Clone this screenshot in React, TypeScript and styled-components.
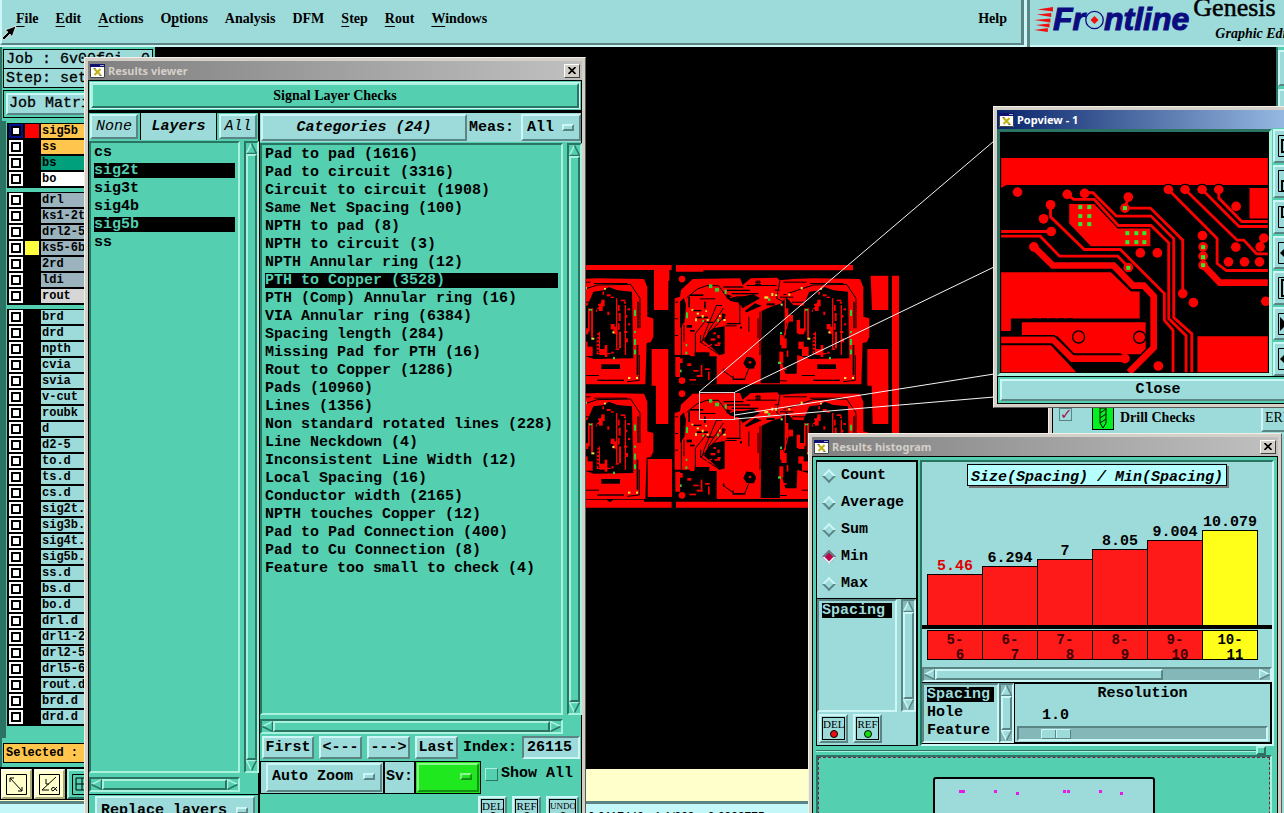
import React from "react";
import styled, { createGlobalStyle, css } from "styled-components";

const c = {
  cyan: "#9ddbdb",
  cyanLight: "#cdf6f6",
  cyanDark: "#5b8585",
  cyanTrough: "#84b8b8",
  green: "#54cfb0",
  greenLight: "#a9f2de",
  greenDark: "#2b7463",
  cream: "#ffffcc",
  orange: "#ffc54c",
  red: "#ff0000",
};

const mono = `"Liberation Mono", monospace`;
const serif = `"Liberation Serif", serif`;

const GlobalStyle = createGlobalStyle`
  *, *::before, *::after { box-sizing: border-box; }
  body { margin: 0; background: #000; overflow: hidden; color: #000;
    font: bold 15px/18px ${mono}; }
  button, input, select { font: inherit; color: inherit; margin: 0; border-radius: 0; }
  button { padding: 0; white-space: nowrap; }
  ul { margin: 0; padding: 0; list-style: none; }
  svg { display: block; flex: none; }
`;

type Tone = "cyan" | "green" | "cream" | "lime";

const tones = {
  cyan: [c.cyan, c.cyanLight, c.cyanDark],
  green: [c.green, c.greenLight, c.greenDark],
  cream: [c.cream, "#fffff0", "#a8a878"],
  lime: ["#1fe81f", "#8ff58f", "#179017"],
};

const raised = css<{ $tone?: Tone }>`
  background: ${(p) => tones[p.$tone ?? "cyan"][0]};
  border: 2px solid;
  border-color: ${(p) => {
    const [, l, d] = tones[p.$tone ?? "cyan"];
    return `${l} ${d} ${d} ${l}`;
  }};
`;

const sunken = css<{ $tone?: Tone }>`
  background: ${(p) => tones[p.$tone ?? "cyan"][0]};
  border: 2px solid;
  border-color: ${(p) => {
    const [, l, d] = tones[p.$tone ?? "cyan"];
    return `${d} ${l} ${l} ${d}`;
  }};
`;

/* ---------- desktop ---------- */

const Desktop = styled.div`
  position: relative;
  display: flex;
  flex-direction: column;
  height: 100vh;
  overflow: hidden;
  background: #000;
`;

const Header = styled.header`
  display: flex;
  height: 47px;
  flex: none;
  background: ${c.cyan};
`;

const MenuBar = styled.nav`
  flex: 1;
  display: flex;
  align-items: flex-start;
  gap: 17px;
  padding: 11px 14px 0 14px;
  border: solid;
  border-width: 0 3px 2px 2px;
  border-color: ${c.cyanDark} ${c.cyanDark} ${c.cyanDark} ${c.cyanLight};
  box-shadow: 0 2px ${c.cyanLight};
  margin-bottom: 2px;
`;

const MenuItem = styled.button<{ $end?: boolean }>`
  border: 0;
  background: none;
  font: bold 14px/16px ${serif};
  margin-left: ${(p) => (p.$end ? "auto" : "0")};
  u {
    text-decoration: underline;
    text-underline-offset: 3px;
  }
`;

const Brand = styled.div`
  display: flex;
  gap: 4px;
  width: 260px;
  padding-left: 4px;
  border-left: 3px solid ${c.cyanLight};
  box-shadow: inset 3px 0 ${c.cyanDark}, inset 0 -2px ${c.cyanLight};
  overflow: hidden;
`;

const Logo = styled.div`
  display: flex;
  align-items: center;
  height: 38px;
  padding-left: 3px;
  color: #0c0c80;
  font: italic bold 32px/38px "Liberation Sans", sans-serif;
  -webkit-text-stroke: 1px #0c0c80;
`;

const Product = styled.div`
  font: 26px/16px ${serif};
  white-space: nowrap;
  -webkit-text-stroke: 0.5px #000;
  small {
    display: block;
    font: italic bold 14px/16px ${serif};
    padding: 10px 0 0 22px;
    -webkit-text-stroke: 0;
  }
`;

const Workspace = styled.main`
  flex: 1;
  min-height: 0;
  display: flex;
`;

const Sidebar = styled.aside`
  width: 155px;
  flex: none;
  display: flex;
  flex-direction: column;
  background: ${c.green};
  border-left: 2px solid ${c.greenDark};
  overflow: hidden;
`;

const JobInfo = styled.div`
  flex: none;
  margin: 2px 2px 2px 1px;
  border: 1px solid #000;
  background: ${c.cyan};
  font-weight: normal;
  line-height: 20px;
  -webkit-text-stroke: 0.3px #000;
  white-space: pre;
  div {
    padding: 0 2px;
    height: 18px;
  }
  div + div {
    border-top: 1px solid #000;
    height: 19px;
  }
`;

const MatrixBox = styled.div`
  flex: none;
  margin: 0 1px 3px 1px;
  padding: 2px;
  border: 1px solid #000;
  button {
    ${raised}
    width: 100%;
    height: 22px;
    font-weight: normal;
    text-align: left;
    padding-left: 1px;
    -webkit-text-stroke: 0.3px #000;
  }
`;

const LayerArea = styled.div`
  flex: 1;
  min-height: 0;
  overflow: hidden;
  border-left: 4px solid ${c.greenDark};
  padding: 2px 0 0 1px;
`;

const LayerGroup = styled.ul`
  background: #000;
  padding: 1px 1px 0 2px;
  margin-bottom: 4px;
`;

const LayerRow = styled.li<{ $bg: string; $swatch: string; $active?: boolean }>`
  label {
    display: grid;
    grid-template-columns: 14px 14px 1fr;
    gap: 2px;
    height: 16px;
    padding-bottom: 2px;
    font-size: 12px;
    line-height: 15px;
  }
  input {
    appearance: none;
    width: 14px;
    height: 14px;
    border: 2px solid ${(p) => (p.$active ? "#001090" : "#fff")};
    background: #fff;
    box-shadow: inset 0 0 0 2px #000;
  }
  i {
    background: ${(p) => p.$swatch};
  }
  span {
    padding-left: 1px;
    background: ${(p) => p.$bg};
    white-space: nowrap;
    overflow: hidden;
  }
`;

const SelectedBar = styled.div`
  flex: none;
  margin: 5px 0 4px 1px;
  padding: 0 2px;
  height: 20px;
  border: 1px solid #000;
  background: ${c.orange};
  font-size: 12px;
`;

const Canvas = styled.section`
  flex: 1;
  background: #000;
`;

const BoardLayer = styled.svg`
  position: absolute;
  left: 580px;
  top: 130px;
`;

const RightTools = styled.aside`
  width: 8px;
  flex: none;
  overflow: hidden;
  background: ${c.green};
  border-left: 2px solid ${c.greenDark};
  display: flex;
  flex-direction: column;
  gap: 3px;
  padding-top: 3px;
`;

const SideTool = styled.button`
  ${raised}
  width: 40px;
  height: 36px;
  flex: none;
`;

const ToolRow = styled.div`
  flex: none;
  display: flex;
  height: 34px;
  border-top: 2px solid #000;
  background: ${c.cream};
`;

const ToolButton = styled.button<{ $tone?: Tone }>`
  ${raised}
  width: 31px;
  height: 30px;
  margin: 0 1px;
  display: grid;
  place-items: center;
  outline: 1px solid #000;
`;

const StatusRow = styled.footer`
  flex: none;
  height: 12px;
  overflow: hidden;
  border-top: 3px solid ${c.cyanDark};
  background: #c4f8f8;
  padding: 5px 0 0 588px;
  font: 12px/16px "Liberation Sans", sans-serif;
  white-space: pre;
`;

/* ---------- windows ---------- */

const Frame = styled.section<{ $x: number; $y: number; $w?: number }>`
  position: absolute;
  left: ${(p) => p.$x}px;
  top: ${(p) => p.$y}px;
  ${(p) => p.$w && `width: ${p.$w}px;`}
  display: flex;
  flex-direction: column;
  border: 1px solid;
  border-color: #f2efe8 #5a5a5a #5a5a5a #f2efe8;
  background: #d4d0c8;
  padding: 3px;
`;

const TitleBar = styled.div<{ $active?: boolean }>`
  display: flex;
  align-items: center;
  gap: 3px;
  height: 19px;
  padding: 0 2px;
  flex: none;
  background: ${(p) => (p.$active ? "linear-gradient(90deg, #0a246a, #a6caf0)" : "linear-gradient(90deg, #808080, #c0c0c0)")};
  color: ${(p) => (p.$active ? "#fff" : "#d4d0c8")};
  font: bold 11px/14px "Noto Sans", sans-serif;
  button {
    margin-left: auto;
    width: 16px;
    height: 14px;
    display: grid;
    place-items: center;
    background: #d4d0c8;
    border: 1px solid;
    border-color: #fff #404040 #404040 #fff;
  }
`;

const Client = styled.div<{ $tone?: Tone; $pad?: number; $flat?: boolean }>`
  flex: 1;
  min-height: 0;
  display: flex;
  flex-direction: column;
  border: ${(p) => (p.$flat ? "0" : "1px")} solid #000;
  background: ${(p) => tones[p.$tone ?? "green"][0]};
  padding: ${(p) => p.$pad ?? 0}px;
`;

const PushButton = styled.button<{ $tone?: Tone; $w?: number; $italic?: boolean; $plain?: boolean }>`
  ${raised}
  ${(p) => (p.$w ? `width: ${p.$w}px; flex: none;` : "flex: 1;")}
  height: 100%;
  font-style: ${(p) => (p.$italic ? "italic" : "normal")};
  font-weight: ${(p) => (p.$plain ? "normal" : "bold")};
`;

const Viewer = styled(Frame)`
  bottom: -40px;
`;

const CheckHeading = styled.button`
  ${raised}
  height: 25px;
  margin: 2px;
  flex: none;
  font: bold 14px/18px ${serif};
  outline: 1px solid ${c.cyanLight};
`;

const Columns = styled.div`
  flex: 1;
  min-height: 0;
  display: grid;
  grid-template-columns: 171px 1fr;
  border-top: 3px solid #000;
`;

const Column = styled.div`
  display: flex;
  flex-direction: column;
  min-width: 0;
  min-height: 0;
  border-right: 2px solid #000;
  &:last-child {
    border-right: 0;
  }
`;

const HeadRow = styled.div<{ $bg?: string; $h: number }>`
  display: flex;
  height: ${(p) => p.$h}px;
  padding: 1px;
  flex: none;
  background: ${(p) => p.$bg ?? c.green};
`;

const LayersTitle = styled.h2`
  flex: 1;
  margin: -1px 2px;
  border: solid #000;
  border-width: 0 1px;
  background: ${c.cyan};
  font: italic bold 15px/28px ${mono};
  text-align: center;
`;

const MeasLabel = styled.label`
  display: flex;
  align-items: center;
  gap: 7px;
  padding-left: 2px;
`;

const SelectBox = styled.div<{ $tone?: Tone; $w: number; $h: number }>`
  ${raised}
  position: relative;
  width: ${(p) => p.$w}px;
  height: ${(p) => p.$h}px;
  flex: none;
  select {
    appearance: none;
    width: 100%;
    height: 100%;
    border: 0;
    background: none;
    padding: 0 4px;
    display: block;
  }
  &::after {
    content: "";
    position: absolute;
    right: 5px;
    top: calc(50% - 4px);
    width: 12px;
    height: 7px;
    border: 2px solid;
    border-color: ${(p) => {
      const [, l, d] = tones[p.$tone ?? "cyan"];
      return `${l} ${d} ${d} ${l}`;
    }};
    pointer-events: none;
  }
`;

const ListGrid = styled.div`
  flex: 1;
  min-height: 0;
  display: grid;
  grid-template-columns: 1fr 14px;
  grid-template-rows: 1fr 15px;
  gap: 4px;
  padding: 1px 0 2px 0;
`;

const ListBox = styled.ul<{ $tone?: Tone }>`
  ${sunken}
  padding: 2px 3px;
  overflow: hidden;
  white-space: nowrap;
`;

const ListItem = styled.li<{ $selected?: boolean; $fg?: string }>`
  height: 15px;
  margin-bottom: 3px;
  line-height: 16px;
  ${(p) => p.$selected && `background: #000; color: ${p.$fg ?? c.green};`}
`;

const Bar = styled.div<{ $dir: "v" | "h"; $tone: Tone }>`
  ${sunken}
  background: ${(p) => (p.$tone === "cyan" ? c.cyanTrough : c.green)};
  display: flex;
  flex: none;
  flex-direction: ${(p) => (p.$dir === "v" ? "column" : "row")};
  ${(p) => (p.$dir === "v" ? "width: 15px;" : "height: 15px;")}
  button {
    border: 0;
    background: none;
    width: 11px;
    height: 11px;
    flex: none;
  }
`;

const Thumb = styled.div<{ $tone: Tone; $grow: number }>`
  ${raised}
  flex: ${(p) => p.$grow};
`;

const Trough = styled.div<{ $grow: number }>`
  flex: ${(p) => p.$grow};
`;

const NavRow = styled.div`
  display: flex;
  align-items: center;
  gap: 5px;
  height: 24px;
  padding: 0 2px 1px 2px;
  flex: none;
`;

const IndexLabel = styled.label`
  display: flex;
  align-items: center;
  gap: 5px;
  height: 100%;
`;

const IndexInput = styled.input`
  ${sunken}
  width: 58px;
  height: 23px;
  padding: 0 3px;
  outline: 0;
`;

const ZoomRow = styled.div`
  display: flex;
  align-items: center;
  height: 34px;
  flex: none;
`;

const ZoomCell = styled.div<{ $bg: string; $lead?: number }>`
  display: flex;
  align-items: center;
  height: 33px;
  padding: 0 1px 0 ${(p) => p.$lead ?? 1}px;
  border: 1px solid #000;
  background: ${(p) => p.$bg};
`;

const ShowAll = styled.label`
  display: flex;
  align-items: center;
  gap: 3px;
  margin: -6px 0 0 4px;
  input {
    appearance: none;
    width: 13px;
    height: 13px;
    border: 1px solid;
    border-color: ${c.greenLight} ${c.greenDark} ${c.greenDark} ${c.greenLight};
  }
`;

const SmallRow = styled.div<{ $end?: boolean }>`
  display: flex;
  gap: 5px;
  padding: 2px;
  justify-content: ${(p) => (p.$end ? "flex-end" : "flex-start")};
  flex: none;
  height: ${(p) => (p.$end ? "54px" : "auto")};
`;

const SmallButton = styled.button<{ $dot: string; $wide?: boolean }>`
  ${raised}
  width: ${(p) => (p.$wide ? 33 : 29)}px;
  height: 29px;
  display: grid;
  place-items: center;
  span {
    display: block;
    width: ${(p) => (p.$wide ? 27 : 23)}px;
    height: 23px;
    border: 1px solid #000;
    font: ${(p) => (p.$wide ? 9 : 11)}px/12px ${serif};
    text-align: center;
  }
  span::after {
    content: "";
    display: block;
    width: 8px;
    height: 8px;
    margin: 0 auto;
    border: 1px solid #000;
    border-radius: 50%;
    background: ${(p) => p.$dot};
  }
`;

const ReplaceRow = styled.div`
  flex: none;
  height: 54px;
  padding: 1px 1px 0 6px;
  border-top: 1px solid #000;
`;

/* ---------- popview ---------- */

const PopBody = styled.div`
  display: flex;
`;

const PopImage = styled.div`
  border: 3px solid;
  border-color: ${c.greenDark} ${c.greenLight} ${c.greenLight} ${c.greenDark};
  background: #000;
`;

const PopTools = styled.div`
  flex: 1;
  display: flex;
  flex-direction: column;
  gap: 2px;
  padding-left: 1px;
  background: #000;
  button {
    ${raised}
    flex: 1;
    width: 36px;
    padding-left: 3px;
    outline: 1px solid ${c.green};
  }
`;

const PopClose = styled.div`
  border: 1px solid #000;
  padding: 2px;
  height: 28px;
  display: flex;
`;

/* ---------- drill checks ---------- */

const DrillFrame = styled(Frame)`
  right: -10px;
  bottom: -10px;
`;

const DrillRow = styled.div`
  display: flex;
  align-items: center;
  height: 33px;
  margin-top: 16px;
  padding-left: 6px;
  font: bold 14px/18px ${serif};
  label {
    display: flex;
    align-items: center;
    flex: 1;
  }
  input {
    appearance: none;
    width: 13px;
    height: 13px;
    margin-bottom: 6px;
    border: 1px solid ${c.cyanDark};
  }
  input:checked::before {
    content: "✓";
    display: block;
    color: #a8104c;
    font: bold 15px/11px "DejaVu Sans", sans-serif;
  }
  svg {
    margin: 0 6px 0 20px;
  }
  button {
    ${raised}
    width: 28px;
    height: 28px;
    overflow: hidden;
    text-align: left;
    font: 14px/18px ${serif};
    padding-left: 2px;
  }
`;

/* ---------- histogram ---------- */

const HistTop = styled.div`
  display: grid;
  grid-template-columns: 102px 1fr;
  gap: 2px;
  height: 286px;
`;

const HistSide = styled.div`
  display: flex;
  flex-direction: column;
  border: 1px solid #000;
  border-top-width: 2px;
  border-right-width: 2px;
  background: ${c.cyan};
`;

const Radios = styled.fieldset`
  border: 0;
  border-bottom: 1px solid #000;
  margin: 0;
  padding: 0 0 0 6px;
  height: 137px;
  label {
    display: flex;
    align-items: center;
    gap: 7px;
    height: 27px;
  }
  input {
    appearance: none;
    width: 10px;
    height: 10px;
    margin: 0 0 0 1px;
    transform: rotate(45deg);
    border: 2px solid;
    border-color: ${c.cyanLight} ${c.cyanDark} ${c.cyanDark} ${c.cyanLight};
  }
  input:checked {
    background: #c40048;
    border-color: ${c.cyanDark} ${c.cyanLight} ${c.cyanLight} ${c.cyanDark};
  }
`;

const SideList = styled.div`
  flex: 1;
  min-height: 0;
  display: grid;
  grid-template-columns: 1fr 15px;
  gap: 4px;
`;

const HistMain = styled.div`
  display: flex;
  flex-direction: column;
  border: 2px solid;
  border-color: ${c.greenDark} ${c.cyanLight} ${c.cyanLight} ${c.greenDark};
  background: ${c.cyan};
  min-width: 0;
`;

const ChartTitle = styled.h2`
  align-self: center;
  margin: 2px 0 0;
  padding: 0 3px;
  height: 22px;
  border: 1px solid #000;
  background: #b6ffff;
  box-shadow: 2px 2px #777;
  font: italic bold 15px/25px ${mono};
`;

const Bars = styled.div`
  flex: 1;
  display: flex;
  align-items: flex-end;
  padding-left: 5px;
  border-bottom: 4px solid #000;
`;

const BarCol = styled.div<{ $h: number; $warn?: boolean; $yellow?: boolean }>`
  width: 56px;
  margin-right: -1px;
  text-align: center;
  line-height: 15px;
  color: ${(p) => (p.$warn ? "#e00000" : "#000")};
  &::after {
    content: "";
    display: block;
    height: ${(p) => p.$h}px;
    border: 1px solid #000;
    border-bottom: 0;
    background: ${(p) => (p.$yellow ? "#ffff1a" : "#ff1a1a")};
  }
`;

const Bins = styled.div`
  display: flex;
  padding: 1px 0 7px 5px;
  flex: none;
`;

const Bin = styled.div<{ $yellow?: boolean }>`
  width: 56px;
  height: 30px;
  margin-right: -1px;
  border: 1px solid #000;
  background: ${(p) => (p.$yellow ? "#ffff1a" : "#ff1a1a")};
  color: ${(p) => (p.$yellow ? "#000" : "#3c0000")};
  font-size: 14px;
  line-height: 15px;
  padding-top: 2px;
  text-align: center;
  span {
    display: block;
    text-indent: 10px;
  }
`;

const HistBottom = styled.div`
  display: grid;
  grid-template-columns: 77px 15px 1fr;
  height: 62px;
  border-top: 1px solid #000;
  border-bottom: 1px solid #000;
  flex: none;
`;

const Resolution = styled.div`
  border: 1px solid #000;
  border-right-width: 2px;
  padding: 2px 2px 0;
  display: flex;
  flex-direction: column;
  label {
    text-align: center;
    line-height: 16px;
  }
  output {
    padding-left: 25px;
    line-height: 16px;
    margin-top: 6px;
  }
`;

const Slider = styled.input`
  ${sunken}
  appearance: none;
  width: 100%;
  height: 15px;
  margin: 2px 0 0;
  padding-left: 12px;
  background: ${c.cyanTrough};
  &::-webkit-slider-thumb {
    appearance: none;
    width: 30px;
    height: 10px;
    border: 1px solid;
    border-color: ${c.cyanLight} ${c.cyanDark} ${c.cyanDark} ${c.cyanLight};
    background: linear-gradient(90deg, ${c.cyan} 13px, ${c.cyanDark} 13px 14px, ${c.cyanLight} 14px 15px, ${c.cyan} 15px);
  }
`;

const Splitter = styled.div`
  height: 9px;
  display: flex;
  align-items: center;
  flex: none;
  &::before {
    content: "";
    flex: 1;
    height: 2px;
    background: ${c.greenDark};
    border-bottom: 1px solid ${c.greenLight};
  }
  i {
    ${raised}
    width: 10px;
    height: 9px;
    border-color: ${c.greenLight} ${c.greenDark} ${c.greenDark} ${c.greenLight};
    background: ${c.green};
    margin-right: 8px;
  }
`;

const Pane = styled.div`
  flex: 1;
  margin-right: 2px;
  border: 2px solid ${c.greenDark};
  border-right-color: ${c.greenLight};
  background: ${c.green};
  display: flex;
  justify-content: center;
`;

const PaneInner = styled.div`
  flex: 1;
  border: 1px dashed #7a2050;
  display: flex;
  justify-content: center;
  padding: 19px 0 0 0;
`;

const Sheet = styled.svg`
  height: 180px;
  border: 2px solid #000;
  border-radius: 3px;
  background: ${c.cyan};
`;

/* ---------- pieces ---------- */

const WinIcon = () => (
  <svg width="15" height="14" viewBox="0 0 15 14" aria-hidden>
    <rect width="15" height="14" fill="#fff" />
    <rect width="15" height="3" fill="#10106e" />
    <rect x="10" y="1" width="4" height="1" fill="#aab" />
    <path d="M4.500 5l6 6M10.500 5l-6 6" stroke="#c0b010" strokeWidth="2" />
    <path d="M3.5 4.500h2M9.500 11.500h2" stroke="#666" strokeWidth="1" />
    <path d="M.5 3v10.500h14V3" fill="none" stroke="#444" />
  </svg>
);

const CloseX = () => (
  <svg width="8" height="7" viewBox="0 0 8 7" aria-hidden>
    <path d="M.5 0l7 7M7.500 0l-7 7" stroke="#000" strokeWidth="1.700" />
  </svg>
);

const arrowPaths = {
  up: ["M5.500 0.500L0.500 10.500", "M5.500 0.500L10.500 10.500H0.500"],
  down: ["M10.500 0.500H0.500L5.500 10.500", "M10.500 0.500L5.500 10.500"],
  left: ["M10.500 0.500L0.500 5.500", "M0.500 5.500L10.500 10.500V0.500"],
  right: ["M0.500 10.500V0.500L10.500 5.500", "M10.500 5.500L0.500 10.500"],
};

const Arrow = ({ dir, tone }: { dir: keyof typeof arrowPaths; tone: Tone }) => (
  <button aria-label={`Scroll ${dir}`}>
    <svg width="11" height="11" viewBox="0 0 11 11">
      <path d={arrowPaths[dir].join(" ")} fill={tones[tone][0]} />
      <path d={arrowPaths[dir][0]} fill="none" stroke={tones[tone][1]} strokeWidth="1.500" />
      <path d={arrowPaths[dir][1]} fill="none" stroke={tones[tone][2]} strokeWidth="1.500" />
    </svg>
  </button>
);

const Scroll = ({ dir, tone = "green", size = 1, rest = 0 }: { dir: "v" | "h"; tone?: Tone; size?: number; rest?: number }) => (
  <Bar $dir={dir} $tone={tone}>
    <Arrow dir={dir === "v" ? "up" : "left"} tone={tone} />
    <Thumb $tone={tone} $grow={size} />
    {rest > 0 && <Trough $grow={rest} />}
    <Arrow dir={dir === "v" ? "down" : "right"} tone={tone} />
  </Bar>
);

const menus: [string, string, string][] = [
  ["", "F", "ile"], ["", "E", "dit"], ["", "A", "ctions"], ["O", "p", "tions"], ["Analysis", "", ""],
  ["DFM", "", ""], ["", "S", "tep"], ["", "R", "out"], ["", "W", "indows"],
];

const steel = "#9bb3bd";
type Layer = [string, string, string?];
const layerGroups: Layer[][] = [
  [["sig5b", c.orange, "#ff0000"], ["ss", c.orange], ["bs", "#00a07c"], ["bo", "#fff"]],
  [["drl", steel], ["ks1-2t", steel], ["drl2-5", steel], ["ks5-6b", steel, "#ffff40"], ["2rd", steel], ["ldi", steel], ["rout", "#d6d6d6"]],
  ["brd", "drd", "npth", "cvia", "svia", "v-cut", "roubk", "d", "d2-5", "to.d", "ts.d", "cs.d", "sig2t.", "sig3b.",
    "sig4t.", "sig5b.", "ss.d", "bs.d", "bo.d", "drl.d", "drl1-2", "drl2-5", "drl5-6", "rout.d", "brd.d", "drd.d",
  ].map((n) => [n, c.cyan] as Layer),
];

const categories = [
  "Pad to pad (1616)", "Pad to circuit (3316)", "Circuit to circuit (1908)", "Same Net Spacing (100)",
  "NPTH to pad (8)", "NPTH to circuit (3)", "NPTH Annular ring (12)", "PTH to Copper (3528)",
  "PTH (Comp) Annular ring (16)", "VIA Annular ring (6384)", "Spacing length (284)", "Missing Pad for PTH (16)",
  "Rout to Copper (1286)", "Pads (10960)", "Lines (1356)", "Non standard rotated lines (228)",
  "Line Neckdown (4)", "Inconsistent Line Width (12)", "Local Spacing (16)", "Conductor width (2165)",
  "NPTH touches Copper (12)", "Pad to Pad Connection (400)", "Pad to Cu Connection (8)", "Feature too small to check (4)",
];

const bars = [
  { label: "5.46", h: 51, bin: ["5-", "6"], warn: true },
  { label: "6.294", h: 59, bin: ["6-", "7"] },
  { label: "7", h: 66, bin: ["7-", "8"] },
  { label: "8.05", h: 76, bin: ["8-", "9"] },
  { label: "9.004", h: 85, bin: ["9-", "10"] },
  { label: "10.079", h: 95, bin: ["10-", "11"], yellow: true },
];

/* Small copper islands, clearances and test pads of one board step. */
const islands: [number, number, number, number][] = [
  [615, 160, 10, 45], [625, 180, 14, 20], [600, 240, 9, 30], [604, 250, 16, 30], [650, 195, 10, 40], [655, 220, 18, 18],
  [655, 260, 16, 22], [666, 275, 20, 28], [672, 160, 5, 70], [682, 160, 5, 84], [702, 146, 14, 22], [712, 134, 10, 20],
  [715, 110, 5, 9], [728, 118, 12, 6], [740, 207, 12, 16], [748, 215, 12, 22], [700, 230, 8, 60], [706, 282, 18, 18],
  [722, 270, 8, 36], [730, 170, 6, 10], [762, 150, 5, 18], [764, 174, 6, 24], [762, 205, 5, 20], [765, 230, 6, 50],
  [780, 140, 6, 6], [790, 160, 8, 6], [784, 180, 6, 8], [792, 205, 7, 6], [780, 228, 10, 6], [786, 250, 6, 12], [770, 134, 14, 5],
  [598, 290, 12, 34], [606, 340, 14, 5], [620, 286, 5, 20], [340, 345, 16, 5], [362, 330, 5, 30], [375, 340, 14, 5],
  [350, 360, 18, 6], [384, 350, 5, 25], [322, 325, 12, 8], [300, 310, 8, 14], [392, 250, 14, 7], [412, 240, 7, 10], [404, 268, 16, 5],
  [328, 372, 20, 5], [412, 262, 10, 6], [400, 232, 8, 6], [740, 125, 10, 4], [755, 280, 10, 5], [742, 290, 7, 6],
];
const clearances: [number, number, number, number][] = [
  [330, 118, 40, 5], [325, 125, 5, 32], [360, 130, 46, 3], [372, 140, 5, 20], [340, 165, 24, 4], [350, 185, 34, 5], [380, 200, 20, 4],
  [430, 94, 60, 4], [440, 104, 70, 4], [455, 114, 80, 4], [466, 124, 52, 4], [500, 90, 90, 3], [530, 76, 3, 18], [536, 76, 3, 18],
  [525, 80, 18, 3], [525, 87, 18, 3],
  [478, 140, 3, 64], [440, 204, 42, 4], [436, 211, 34, 3], [505, 185, 3, 45], [320, 210, 16, 8], [330, 225, 14, 5],
  [286, 140, 8, 3], [286, 190, 8, 3], [286, 240, 8, 3], [480, 215, 6, 6], [560, 145, 24, 6], [610, 80, 70, 3], [690, 84, 100, 3],
  [820, 140, 4, 80], [818, 270, 5, 90], [560, 376, 60, 3], [700, 374, 80, 4], [712, 328, 56, 14], [665, 360, 40, 3], [585, 104, 14, 3],
  [458, 362, 3, 14], [460, 372, 36, 3], [430, 340, 3, 12], [426, 176, 8, 18], [410, 150, 16, 3], [600, 125, 40, 3], [636, 140, 44, 3],
];
const testPads: [number, number, number, number, string?][] = [
  [387, 88, 10, 11], [405, 99, 12, 11], [434, 104, 6, 13], [318, 172, 6, 18], [334, 162, 6, 5, "y"], [345, 190, 6, 9, "y"],
  [350, 173, 7, 6, "y"], [365, 180, 6, 8, "y"], [367, 195, 5, 6], [380, 192, 6, 6, "y"], [376, 166, 5, 5, "y"], [411, 192, 6, 8],
  [417, 180, 5, 6, "y"], [430, 192, 7, 6, "y"], [553, 124, 12, 7, "y"], [564, 130, 7, 8], [574, 114, 6, 9, "y"], [585, 118, 7, 5, "y"],
  [625, 116, 6, 6, "y"], [662, 96, 6, 7, "y"], [602, 146, 6, 6, "y"], [675, 162, 9, 5], [600, 231, 6, 7], [682, 248, 9, 6, "y"],
  [317, 267, 5, 7], [316, 290, 6, 8], [300, 344, 5, 8], [594, 320, 9, 7], [810, 165, 6, 18], [810, 228, 6, 6], [810, 252, 6, 18],
  [810, 284, 6, 14], [747, 306, 6, 7], [745, 229, 6, 6, "y"], [720, 99, 6, 5, "y"], [792, 366, 7, 6, "y"], [816, 366, 6, 6, "y"],
];

const Step = () => (
  <g>
    <path fill={c.red} d="M284 130L300 125 303 105 338 72 480 70 488 90 512 70 592 68 598 76 640 72 700 70 840 72 850 96 850 185 868 190 868 246 860 262 848 264 844 388 330 388 330 300 284 300z" />
    <path fill="#000" d="M545 168L580 152 602 146 618 126 640 150 670 152 688 110 720 106 734 96 760 106 804 110 808 310 690 312 652 300 650 356 616 356 600 300 600 385 542 385zM300 304H344V292H388V304H410V388H300zM384 232L400 220 434 214 434 296 420 300 398 280 372 258zM300 140L312 128 318 150 314 200 300 220zM440 118L470 128 520 118 540 130 488 160 482 150 440 130zM500 305l18 4 10 14-6 18-22-2-10-14zM494 168L525 145 545 152 500 172z" />
    <path fill="none" stroke="#000" strokeWidth="3" d="M320 128L352 102 380 92 416 92 436 120 450 136 480 142M362 264L440 176M410 150L372 240 368 258M346 302V236L378 196M384 230L430 160M362 240V262L420 300M428 346L464 372H494L506 342M540 170V300M534 190V250M600 76L590 130 640 156 690 158V240M610 120L700 90 800 88 828 130V220M826 300V376L790 380M330 386L410 386M304 140V300M312 210V260" />
    <path fill="none" stroke={c.red} strokeWidth="4" d="M440 90L500 108 580 104 640 120M450 128L530 100M372 280L396 268M616 130V240M624 200L608 260M684 160V250M700 250V296H740M696 170L716 140M758 130V280M784 150V300" />
    {islands.map(([x, y, w, h], i) => <rect key={i} x={x} y={y} width={w} height={h} fill={c.red} />)}
    {clearances.map(([x, y, w, h], i) => <rect key={i} x={x} y={y} width={w} height={h} fill="#000" />)}
    {testPads.map(([x, y, w, h, k], i) => <rect key={i} x={x} y={y} width={w} height={h} fill={k ? "#e8e040" : "#30d030"} />)}
    <path stroke="#000" strokeWidth="6" strokeDasharray="5 6" d="M702 130V290M774 140V300" />
    <circle cx="306" cy="72" r="10" fill={c.red} />
    <circle cx="306" cy="377" r="10" fill={c.red} />
    <circle cx="510" cy="324" r="17" />
    <circle cx="510" cy="322" r="4" fill={c.red} />
    <path fill={c.red} d="M286 306h14v60h-14zM438 142h38v58h-38z" />
  </g>
);

const Board = () => (
  <BoardLayer width="420" height="390" viewBox="580 130 420 390" aria-label="Panel layout">
    <g transform="translate(580 255) scale(.33333)">
      <path fill={c.red} d="M15 30H275V45H268V78H222V45H15zM288 30H819V46H370V50H288zM222 65H265V165H222zM215 282H265V507H228V392H215zM203 612H276V726H203zM15 734H80L90 742 100 734H192V740H275V758H15zM288 740H700V758H288zM872 62H925V165H876zM862 282H925V392H862zM875 392H925V507H878zM936 62H957V545H936z" />
      {[0, 344].map((dy) => (
        <React.Fragment key={dy}>
          <g transform={`translate(0 ${dy})`}><Step /></g>
          <svg x="15" y={dy} width="220" height="400" viewBox="663 0 220 400"><Step /></svg>
        </React.Fragment>
      ))}
    </g>
    <rect x="699.500" y="392.500" width="35" height="27" fill="none" stroke="#d8d8d8" />
    <path d="M699 392L994 141M735 392L994 267M735 415L994 374M735 419L994 397" stroke="#f4f4f4" fill="none" />
  </BoardLayer>
);

const PopPicture = () => (
  <svg width="269" height="241" viewBox="48 96 805 722" aria-label="Magnified copper detail">
    <rect x="48" y="96" width="805" height="722" />
    <g fill={c.red}>
      <path d="M51 174H850V255H66L51 264zM795 264H850V355H795zM255 312H330L400 385H498V438H320L255 370zM51 516H380L440 574H466V655H80V692H51zM113 666H484V745L468 762H272L220 708H113zM51 735H200L276 816H51zM639 708H850V816H639z" />
      {[[100, 276], [249, 283], [301, 280], [199, 314], [178, 356], [201, 394], [149, 440], [432, 291], [422, 324], [468, 458], [519, 458], [432, 502], [595, 580], [627, 607], [522, 797], [552, 268], [602, 268], [653, 268], [703, 268], [755, 319], [654, 406], [754, 441], [732, 485], [780, 485], [825, 485], [838, 414], [827, 440], [844, 603], [422, 775], [656, 440], [656, 468], [656, 495]].map(([x, y]) => (
        <circle key={`${x}-${y}`} cx={x} cy={y} r="14.500" />
      ))}
    </g>
    <g fill="none" stroke={c.red} strokeWidth="8.500">
      <path d="M51 394H201M51 408H168L226 468H400L432 500M199 314V350L300 448H408L540 580V660L566 690V816M249 283L268 298H330L402 376H500L553 428V655L605 706V816M301 278H326L396 348H500L568 416V652L622 700V816M422 324H498L595 420V580M432 291L422 324M552 268L698 415V490L726 511H850M602 268L758 420H778L816 461H850M653 268L764 379H850M703 268V294L772 364H850M838 414L827 440" />
      <path d="M149 440L206 496H388L446 556H478L508 588V742L434 816" strokeWidth="20" />
      <path d="M51 719H208L264 775H425M656 495L706 547H850" strokeWidth="20" />
    </g>
    <g fill="none" stroke="#000" strokeWidth="4">
      <circle cx="283" cy="710" r="18" />
      <circle cx="466" cy="711" r="18" />
      <path d="M536 264a17 17 0 0 1 32 0M586 264a17 17 0 0 1 32 0M637 264a17 17 0 0 1 32 0M687 264a17 17 0 0 1 32 0" />
      <path d="M144 656h122" strokeDasharray="18 8" />
      <path d="M51 706H210L268 761H410" />
    </g>
    <g fill="#30e830">
      {[[288, 321], [315, 321], [288, 348], [315, 348], [288, 372], [315, 372], [429, 399], [456, 399], [480, 399], [429, 426], [456, 426], [480, 426], [422, 324], [432, 503], [656, 441], [656, 471], [656, 495]].map(([x, y]) => (
        <rect key={`${x}-${y}`} x={x - 6} y={y - 6} width="12" height="12" />
      ))}
    </g>
  </svg>
);

const FrontlineLogo = () => (
  <Logo>
    <svg width="19" height="26" viewBox="0 0 22 26" preserveAspectRatio="none" aria-hidden>
      <path fill="#f01010" d="M4 3.500L22 1V5.500zM3 8.500L20 7V11zM0 14L19 12.500V16.500zM2 19L18 17.500V21.500zM0 24L16 22V26z" />
    </svg>
    <span>Fr</span>
    <svg width="19" height="21" viewBox="0 0 19 21" aria-label="o">
      <circle cx="9.500" cy="11" r="8.700" fill="none" stroke="#0c0c80" strokeWidth="1.300" />
      <path d="M9.500 7l4 4-4 4-4-4z" fill="#f01010" />
    </svg>
    <span>ntline</span>
  </Logo>
);

const popIcons = [
  { outline: "M4 5H20V17H4z" },
  { outline: "M4 11H20V21H4z" },
  { outline: "M4 1H20V11H4z" },
  { solid: "M2 11L9 4V18z" },
  { outline: "M4 3H20V19H4z" },
  { solid: "M2 4L9 11L2 18z" },
  { solid: "M2 11L9 4V18z" },
];

export default function App() {
  return (
    <>
      <GlobalStyle />
      <Desktop>
        <Header>
          <MenuBar>
            {menus.map(([a, u, b]) => (
              <MenuItem key={a + u + b}>{a}{u && <u>{u}</u>}{b}</MenuItem>
            ))}
            <MenuItem $end>Help</MenuItem>
          </MenuBar>
          <Brand>
            <FrontlineLogo />
            <Product>Genesis<small>Graphic Editor</small></Product>
          </Brand>
        </Header>

        <Workspace>
          <Sidebar>
            <JobInfo><div>Job : 6v00f0i. 0</div><div>Step: set</div></JobInfo>
            <MatrixBox><button>Job Matrix</button></MatrixBox>
            <LayerArea>
              {layerGroups.map((g, gi) => (
                <LayerGroup key={gi}>
                  {g.map(([name, bg, swatch], i) => (
                    <LayerRow key={name} $bg={bg} $swatch={swatch ?? "#000"} $active={gi === 0 && i === 0}>
                      <label><input type="checkbox" /><i /><span>{name}</span></label>
                    </LayerRow>
                  ))}
                </LayerGroup>
              ))}
            </LayerArea>
            <SelectedBar>Selected :</SelectedBar>
          </Sidebar>
          <Canvas><Board /></Canvas>
          <RightTools>
            {[0, 1, 2, 3].map((i) => <SideTool key={i} aria-label={`View tool ${i + 1}`} />)}
          </RightTools>
        </Workspace>
        <ToolRow>
          <ToolButton $tone="cream" aria-label="Zoom area">
            <svg width="21" height="21" viewBox="0 0 21 21" fill="none" stroke="#000">
              <path d="M.5.5h20v20H.500zM4 4l12 13M4 8V4h4M12 17h4v-4" />
            </svg>
          </ToolButton>
          <ToolButton $tone="cream" aria-label="Measure">
            <svg width="21" height="21" viewBox="0 0 21 21" fill="none" stroke="#000">
              <path d="M.5.500h20v20H.5zM17 3L3 16h7M7 5v5h3M18 13l-4 4q-3-1-1-3t5 3" />
            </svg>
          </ToolButton>
          <ToolButton $tone="green" aria-label="Grid">
            <svg width="21" height="21" viewBox="0 0 21 21" fill="none" stroke="#000">
              <path d="M.5.500h20v20H.5zM4 4h16M4 10h16M4 16h16M4 4v12M10 4v12M16 4v12" />
            </svg>
          </ToolButton>
        </ToolRow>
        <StatusRow>0.0117449, -1.1/393,   0.0393775</StatusRow>

        <DrillFrame $x={1048} $y={380} aria-label="Checklist">
          <Client $tone="cyan">
            <DrillRow>
              <label>
                <input type="checkbox" defaultChecked />
                <svg width="22" height="24" viewBox="0 0 22 24">
                  <rect x=".5" y=".5" width="21" height="23" fill="#00f020" stroke="#000" />
                  <path d="M8 2h6v15l-3 5-3-5zM8 7l6-4M8 12l6-4M8 17l6-4" fill="none" stroke="#000" />
                </svg>
                Drill Checks
              </label>
              <button>ERF</button>
            </DrillRow>
          </Client>
        </DrillFrame>

        <Frame $x={993} $y={106} $w={330}>
          <TitleBar $active><WinIcon />Popview - 1</TitleBar>
          <Client $flat>
            <PopBody>
              <PopImage><PopPicture /></PopImage>
              <PopTools>
                {popIcons.map(({ outline, solid }, i) => (
                  <button key={i} aria-label={`Popview tool ${i + 1}`}>
                    <svg width="22" height="22" viewBox="0 0 22 22">
                      <path d="M.5.5H21.500V21.500H.5z" fill="none" stroke="#000" />
                      {outline && <path d={outline} fill="none" stroke="#000" strokeWidth="2" />}
                      {solid && <path d={solid} />}
                    </svg>
                  </button>
                ))}
              </PopTools>
            </PopBody>
            <PopClose><PushButton>Close</PushButton></PopClose>
          </Client>
        </Frame>

        <Frame $x={808} $y={433} $w={474}>
          <TitleBar><WinIcon />Results histogram<button aria-label="Close"><CloseX /></button></TitleBar>
          <Client $pad={3}>
            <HistTop>
              <HistSide>
                <Radios>
                  {["Count", "Average", "Sum", "Min", "Max"].map((n) => (
                    <label key={n}><input type="radio" name="stat" defaultChecked={n === "Min"} />{n}</label>
                  ))}
                </Radios>
                <SideList>
                  <ListBox><ListItem $selected $fg={c.cyan}>Spacing</ListItem></ListBox>
                  <Scroll dir="v" tone="cyan" />
                </SideList>
                <SmallRow>
                  <SmallButton $dot="#e81010"><span>DEL</span></SmallButton>
                  <SmallButton $dot="#10e010"><span>REF</span></SmallButton>
                </SmallRow>
              </HistSide>
              <HistMain>
                <ChartTitle>Size(Spacing) / Min(Spacing)</ChartTitle>
                <Bars>
                  {bars.map((b) => <BarCol key={b.label} $h={b.h} $warn={b.warn} $yellow={b.yellow}>{b.label}</BarCol>)}
                </Bars>
                <Bins>
                  {bars.map((b) => <Bin key={b.label} $yellow={b.yellow}>{b.bin[0]}<span>{b.bin[1]}</span></Bin>)}
                </Bins>
                <Scroll dir="h" tone="cyan" size={70} rest={30} />
                <HistBottom>
                  <ListBox>
                    <ListItem $selected $fg={c.cyan}>Spacing</ListItem>
                    <ListItem>Hole</ListItem>
                    <ListItem>Feature</ListItem>
                  </ListBox>
                  <Scroll dir="v" tone="cyan" />
                  <Resolution>
                    <label htmlFor="resolution">Resolution</label>
                    <output htmlFor="resolution">1.0</output>
                    <Slider id="resolution" type="range" min="0" max="10" step="0.1" defaultValue="0.5" />
                  </Resolution>
                </HistBottom>
              </HistMain>
            </HistTop>
            <Splitter><i /></Splitter>
            <Pane>
              <PaneInner>
                <Sheet width="222" viewBox="0 0 218 176" preserveAspectRatio="xMinYMin">
                  <path fill="#e818e8" d="M24 11h6v3h-6zM59 11h3v3h-3zM81 13h3v3h-3zM128 11h3v3h-3zM132 11h3v3h-3zM164 11h3v3h-3zM185 13h3v3h-3z" />
                </Sheet>
              </PaneInner>
            </Pane>
          </Client>
        </Frame>

        <Viewer $x={84} $y={57} $w={502}>
          <TitleBar><WinIcon />Results viewer<button aria-label="Close"><CloseX /></button></TitleBar>
          <Client>
            <CheckHeading $tone="green">Signal Layer Checks</CheckHeading>
            <Columns>
              <Column>
                <HeadRow $h={27}>
                  <PushButton $w={48} $italic $plain>None</PushButton>
                  <LayersTitle>Layers</LayersTitle>
                  <PushButton $w={38} $italic $plain>All</PushButton>
                </HeadRow>
                <ListGrid>
                  <ListBox $tone="green">
                    {["cs", "sig2t", "sig3t", "sig4b", "sig5b", "ss"].map((n) => (
                      <ListItem key={n} $selected={n === "sig2t" || n === "sig5b"}>{n}</ListItem>
                    ))}
                  </ListBox>
                  <Scroll dir="v" />
                  <Scroll dir="h" />
                </ListGrid>
                <ReplaceRow>
                  <SelectBox $w={160} $h={30}>
                    <select aria-label="Layer action"><option>Replace layers</option></select>
                  </SelectBox>
                </ReplaceRow>
              </Column>
              <Column>
                <HeadRow $bg={c.cyan} $h={29}>
                  <PushButton $w={206} $italic>Categories (24)</PushButton>
                  <MeasLabel>Meas:
                    <SelectBox $w={60} $h={27}><select><option>All</option></select></SelectBox>
                  </MeasLabel>
                </HeadRow>
                <ListGrid>
                  <ListBox $tone="green">
                    {categories.map((n) => <ListItem key={n} $selected={n.startsWith("PTH to")}>{n}</ListItem>)}
                  </ListBox>
                  <Scroll dir="v" />
                  <Scroll dir="h" />
                </ListGrid>
                <NavRow>
                  <PushButton $w={52}>First</PushButton>
                  <PushButton $w={43}>&lt;---</PushButton>
                  <PushButton $w={43}>---&gt;</PushButton>
                  <PushButton $w={43}>Last</PushButton>
                  <IndexLabel>Index:<IndexInput defaultValue="26115" /></IndexLabel>
                </NavRow>
                <ZoomRow>
                  <ZoomCell $bg={c.cyan} $lead={5}>
                    <SelectBox $w={116} $h={29}><select aria-label="Zoom mode"><option>Auto Zoom</option></select></SelectBox>
                  </ZoomCell>
                  <ZoomCell $bg={c.cyan}><label htmlFor="severity">Sv:</label></ZoomCell>
                  <ZoomCell $bg="#1fe81f">
                    <SelectBox $tone="lime" $w={62} $h={29}><select id="severity"><option></option></select></SelectBox>
                  </ZoomCell>
                  <ShowAll><input type="checkbox" />Show All</ShowAll>
                </ZoomRow>
                <SmallRow $end>
                  <SmallButton $dot="#e81010"><span>DEL</span></SmallButton>
                  <SmallButton $dot="#10e010"><span>REF</span></SmallButton>
                  <SmallButton $dot="#e8e010" $wide><span>UNDO</span></SmallButton>
                </SmallRow>
              </Column>
            </Columns>
          </Client>
        </Viewer>

        <Pointer width="16" height="16" viewBox="0 0 16 16" aria-hidden>
          <path d="M15 1L4 5l3 2-6 6 2 2 6-6 2 3z" fill="#000" stroke="#fff" strokeWidth=".7" />
        </Pointer>
      </Desktop>
    </>
  );
}

const Pointer = styled.svg`
  position: absolute;
  left: 1px;
  top: 25px;
`;
